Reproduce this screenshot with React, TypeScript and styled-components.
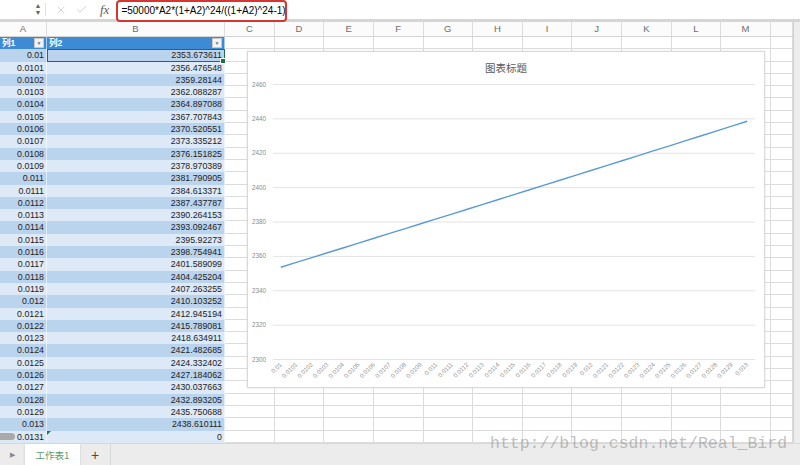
import { FC } from "react";
import styled, { createGlobalStyle } from "styled-components";
import { X, Check } from "lucide-react";

const GlobalStyle = createGlobalStyle`
    html, body {
        margin: 0;
        padding: 0;
        background: #fff;
        overflow: hidden;
    }
    body {
        font-family: "Liberation Sans", Arial, sans-serif;
    }
`;

const ROW_H = 12.3;
const COLUMNS = "47px 178px repeat(11, 49.64px) 22px";
const LETTERS = "ABCDEFGHIJKLMN".split("");

const RATES = [
    "0.01", "0.0101", "0.0102", "0.0103", "0.0104", "0.0105", "0.0106", "0.0107",
    "0.0108", "0.0109", "0.011", "0.0111", "0.0112", "0.0113", "0.0114", "0.0115",
    "0.0116", "0.0117", "0.0118", "0.0119", "0.012", "0.0121", "0.0122", "0.0123",
    "0.0124", "0.0125", "0.0126", "0.0127", "0.0128", "0.0129", "0.013", "0.0131",
];

const PAYMENTS = [
    "2353.673611", "2356.476548", "2359.28144", "2362.088287", "2364.897088",
    "2367.707843", "2370.520551", "2373.335212", "2376.151825", "2378.970389",
    "2381.790905", "2384.613371", "2387.437787", "2390.264153", "2393.092467",
    "2395.92273", "2398.754941", "2401.589099", "2404.425204", "2407.263255",
    "2410.103252", "2412.945194", "2415.789081", "2418.634911", "2421.482685",
    "2424.332402", "2427.184062", "2430.037663", "2432.893205", "2435.750688",
    "2438.610111", "0",
];

/* ---------- formula bar ---------- */

const Window = styled.div`
    position: relative;
    width: 800px;
    height: 465px;
    display: flex;
    flex-direction: column;
    overflow: hidden;
`;

const FormulaBar = styled.div`
    height: 19px;
    flex: none;
    display: flex;
    align-items: flex-start;
    background: #fff;
    position: relative;
    z-index: 2;
`;

const NameBox = styled.div`
    width: 33px;
    height: 19px;
`;

const Spinner = styled.div`
    width: 10px;
    height: 19px;
    display: flex;
    flex-direction: column;
    align-items: center;
    justify-content: center;
    gap: 1px;
    color: #666;
    font-size: 7px;
    line-height: 6px;
`;

const BarDivider = styled.div`
    width: 1px;
    height: 13px;
    margin: 3px 8px 0 2px;
    background: #e2e2e2;
`;

const BarIcon = styled.div`
    width: 13px;
    height: 19px;
    display: flex;
    align-items: center;
    justify-content: center;
    color: #c4c4c4;
    margin-right: 8px;
`;

const Fx = styled.div`
    font-family: "Liberation Serif", "Times New Roman", serif;
    font-style: italic;
    font-size: 13px;
    line-height: 19px;
    color: #606060;
    margin: 0 7px 0 4px;
`;

const FormulaBox = styled.div`
    box-sizing: border-box;
    width: 171px;
    height: 22px;
    border: 2px solid #d7352f;
    border-radius: 4px;
    padding: 0 0 0 3px;
    font-size: 10px;
    line-height: 18px;
    color: #000;
    white-space: nowrap;
    overflow: hidden;
    background: #fff;
`;

const Band = styled.div`
    height: 3px;
    flex: none;
    background: #d5d5d5;
`;

/* ---------- sheet ---------- */

const SheetArea = styled.div`
    position: relative;
    display: flex;
    flex: none;
    height: 421px;
`;

const GridArea = styled.div`
    width: 793px;
    overflow: hidden;
`;

const ScrollTrack = styled.div`
    flex: 1;
    background: #ededed;
    border-left: 1px solid #d0d0d0;
`;

const HeaderRow = styled.div`
    display: grid;
    grid-template-columns: ${COLUMNS};
    height: 15px;
    border-bottom: 1px solid #d3d3d3;
    box-sizing: border-box;
`;

const ColumnLetter = styled.div`
    border-right: 1px solid #dedede;
    font-size: 9.5px;
    line-height: 14px;
    text-align: center;
    color: #6d6d6d;
    background: #fbfbfb;
`;

const Rows = styled.div`
    display: grid;
    grid-template-columns: ${COLUMNS};
    grid-auto-rows: ${ROW_H}px;
`;

type CellKind = "head" | "dark" | "light" | "empty";

const backgrounds: Record<CellKind, string> = {
    head: "#3d8ad5",
    dark: "#bbd4ee",
    light: "#dde9f6",
    empty: "#fff",
};

const Cell = styled.div<{ $kind: CellKind; $selected?: boolean; $flag?: boolean }>`
    position: relative;
    box-sizing: border-box;
    background: ${(p) => backgrounds[p.$kind]};
    border-right: 1px solid ${(p) => (p.$kind === "empty" ? "#dcdcdc" : "rgba(255,255,255,0.55)")};
    border-bottom: ${(p) => (p.$kind === "empty" ? "1px solid #dcdcdc" : "none")};
    font-size: 8.8px;
    line-height: ${ROW_H}px;
    color: ${(p) => (p.$kind === "head" ? "#fff" : "#222")};
    text-align: right;
    padding-right: 2px;
    white-space: nowrap;
    overflow: visible;
    outline: ${(p) => (p.$selected ? "1.6px solid #1f7045" : "none")};
    outline-offset: -1.6px;
    z-index: ${(p) => (p.$selected ? 1 : 0)};

    &::after {
        content: "";
        display: ${(p) => (p.$selected ? "block" : "none")};
        position: absolute;
        right: -2px;
        bottom: -2px;
        width: 4px;
        height: 4px;
        background: #1f7045;
        border: 1px solid #fff;
    }

    &::before {
        content: "";
        display: ${(p) => (p.$flag ? "block" : "none")};
        position: absolute;
        left: 0;
        top: 0;
        border-top: 4px solid #1e7b45;
        border-right: 4px solid transparent;
    }
`;

const HeadContent = styled.div`
    display: flex;
    align-items: center;
    justify-content: space-between;
    height: 100%;
    padding-left: 2px;
`;

const HeadLabel = styled.span`
    font-family: "Liberation Sans", "Noto Sans CJK SC", sans-serif;
    font-weight: bold;
    font-size: 8.6px;
`;

const DropButton = styled.span`
    box-sizing: border-box;
    width: 10px;
    height: 10px;
    background: #f3f3f3;
    border: 1px solid #c8c8c8;
    display: flex;
    align-items: center;
    justify-content: center;
    color: #777;
    font-size: 5px;
    line-height: 5px;
`;

const ScrollThumb = styled.div`
    position: absolute;
    left: -4px;
    top: 411px;
    width: 19px;
    height: 7px;
    border-radius: 4px;
    background: #a9a9a9;
    z-index: 3;
`;

/* ---------- chart ---------- */

const Chart = styled.div`
    position: absolute;
    left: 247px;
    top: 29px;
    width: 518px;
    height: 337px;
    box-sizing: border-box;
    background: #fff;
    border: 1px solid #d9d9d9;
    box-shadow: 0 0 2px rgba(0, 0, 0, 0.12);
    display: flex;
    flex-direction: column;
    z-index: 2;
`;

const ChartTitle = styled.div`
    height: 30px;
    display: flex;
    align-items: center;
    justify-content: center;
    font-family: "Noto Sans CJK SC", sans-serif;
    font-size: 10.5px;
    color: #595959;
`;

const PLOT_LEFT = 25;
const PLOT_RIGHT = 507;
const PLOT_TOP = 2.5;
const STEP_Y = 34.375;
const PLOT_BOTTOM = PLOT_TOP + STEP_Y * 8;
const CAT_W = (PLOT_RIGHT - PLOT_LEFT) / 31;

const toY = (v: number) => PLOT_BOTTOM - ((v - 2300) / 160) * (STEP_Y * 8);

const LineChart: FC = () => {
    const ticks = [2460, 2440, 2420, 2400, 2380, 2360, 2340, 2320, 2300];
    const cats = RATES.slice(0, 31);
    const points = cats
        .map((_, i) => `${PLOT_LEFT + (i + 0.5) * CAT_W},${toY(parseFloat(PAYMENTS[i]))}`)
        .join(" ");

    return (
        <svg width="516" height="305" style={{ display: "block" }}>
            {ticks.map((t) => (
                <g key={t}>
                    <line x1={PLOT_LEFT} x2={PLOT_RIGHT} y1={toY(t)} y2={toY(t)} stroke="#e3e3e3" strokeWidth="1" />
                    <text
                        x="18"
                        y={toY(t) + 2}
                        textAnchor="end"
                        fontSize="6.3"
                        fill="#8a8a8a"
                        fontFamily="Liberation Sans, sans-serif"
                    >
                        {t}
                    </text>
                </g>
            ))}
            {cats.map((c, i) => {
                const x = PLOT_LEFT + (i + 0.5) * CAT_W + 1.5;
                const y = PLOT_BOTTOM + 5.5;
                return (
                    <text
                        key={c}
                        x={x}
                        y={y}
                        textAnchor="end"
                        fontSize="6.2"
                        fill="#969696"
                        fontFamily="Liberation Sans, sans-serif"
                        transform={`rotate(-45 ${x} ${y})`}
                    >
                        {c}
                    </text>
                );
            })}
            <polyline points={points} fill="none" stroke="#5b9bd5" strokeWidth="1.4" strokeLinejoin="round" />
        </svg>
    );
};

/* ---------- tab bar ---------- */

const TabBar = styled.div`
    flex: 1;
    display: flex;
    align-items: stretch;
    background: #ececec;
    border-top: 1px solid #d8d8d8;
`;

const PlayButton = styled.div`
    width: 25px;
    display: flex;
    align-items: center;
    justify-content: center;
    color: #8a8a8a;
    font-size: 7px;
`;

const SheetTab = styled.div`
    width: 55px;
    background: #fff;
    display: flex;
    align-items: center;
    justify-content: center;
    font-family: "Noto Sans CJK SC", sans-serif;
    font-size: 9.5px;
    color: #5b9c6c;
    box-shadow: 0 1px 2px rgba(0, 0, 0, 0.18);
`;

const AddButton = styled.div`
    width: 30px;
    display: flex;
    align-items: center;
    justify-content: center;
    color: #4a4a4a;
    font-size: 14px;
    border-right: 1px solid #d6d6d6;
`;

const Watermark = styled.div`
    position: absolute;
    left: 490px;
    top: 434px;
    font-family: "Liberation Mono", "Courier New", monospace;
    font-size: 16.5px;
    color: rgba(140, 140, 140, 0.55);
    white-space: nowrap;
    z-index: 5;
    pointer-events: none;
`;

/* ---------- app ---------- */

const Sheet: FC = () => {
    const rows: JSX.Element[] = [];
    // table header row
    rows.push(
        <Cell key="h-a" $kind="head">
            <HeadContent>
                <HeadLabel>列1</HeadLabel>
                <DropButton>▼</DropButton>
            </HeadContent>
        </Cell>,
        <Cell key="h-b" $kind="head">
            <HeadContent>
                <HeadLabel>列2</HeadLabel>
                <DropButton>▼</DropButton>
            </HeadContent>
        </Cell>,
    );
    for (let c = 2; c < LETTERS.length; c++) rows.push(<Cell key={`h-${c}`} $kind="empty" />);

    RATES.forEach((rate, i) => {
        const kind: CellKind = i % 2 === 0 ? "dark" : "light";
        rows.push(
            <Cell key={`a-${i}`} $kind={kind}>
                {rate}
            </Cell>,
            <Cell key={`b-${i}`} $kind={kind} $selected={i === 0} $flag={i === RATES.length - 1}>
                {PAYMENTS[i]}
            </Cell>,
        );
        for (let c = 2; c < LETTERS.length; c++) rows.push(<Cell key={`${i}-${c}`} $kind="empty" />);
    });

    return (
        <SheetArea>
            <GridArea>
                <HeaderRow>
                    {LETTERS.map((l, i) => (
                        <ColumnLetter key={l}>{i < 13 ? l : ""}</ColumnLetter>
                    ))}
                </HeaderRow>
                <Rows>{rows}</Rows>
            </GridArea>
            <ScrollTrack />
            <Chart>
                <ChartTitle>图表标题</ChartTitle>
                <LineChart />
            </Chart>
            <ScrollThumb />
        </SheetArea>
    );
};

const App: FC = () => {
    return (
        <Window>
            <GlobalStyle />
            <FormulaBar>
                <NameBox />
                <Spinner>
                    <span>▲</span>
                    <span>▼</span>
                </Spinner>
                <BarDivider />
                <BarIcon>
                    <X size={12} strokeWidth={1.4} />
                </BarIcon>
                <BarIcon>
                    <Check size={13} strokeWidth={1.4} />
                </BarIcon>
                <Fx>fx</Fx>
                <FormulaBox>=50000*A2*(1+A2)^24/((1+A2)^24-1)</FormulaBox>
            </FormulaBar>
            <Band />
            <Sheet />
            <TabBar>
                <PlayButton>▶</PlayButton>
                <SheetTab>工作表1</SheetTab>
                <AddButton>+</AddButton>
            </TabBar>
            <Watermark>http://blog.csdn.net/Real_Bird</Watermark>
        </Window>
    );
};

export default App;
